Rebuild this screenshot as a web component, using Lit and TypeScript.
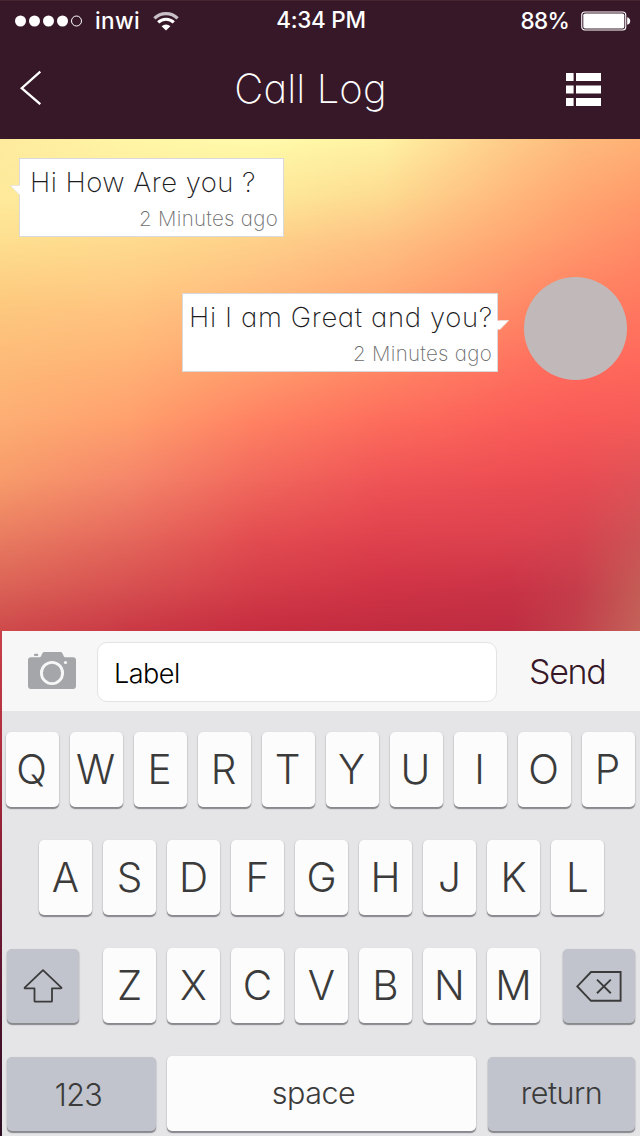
import { LitElement, html, css, svg } from "lit";
import { customElement, property } from "lit/decorators.js";

/** Horizontal positions of the mesh columns, in percent. */
const COLUMNS = [0, 20, 40, 60, 80, 90, 100];

/** Colour mesh of the wallpaper: each row is [y, one colour per column]. */
const MESH: [number, string[]][] = [
  [0, ["#feeb9e", "#fff6a6", "#fffbab", "#fff3a3", "#fecb88", "#febb7c", "#ffb275"]],
  [61, ["#fee99a", "#feea9a", "#fde898", "#fdd98f", "#ffb67a", "#ffa671", "#ff9a6b"]],
  [101, ["#fedf90", "#fedb8e", "#fed18a", "#fec283", "#ffa773", "#ff996c", "#ff8c66"]],
  [161, ["#fdca80", "#ffc782", "#ffb97c", "#ffa874", "#ff8e68", "#ff8062", "#ff7a60"]],
  [221, ["#fdbb78", "#ffb476", "#ffa06e", "#ff8a66", "#ff7460", "#ff6c5d", "#ff695c"]],
  [281, ["#fdae73", "#ffa06d", "#ff8263", "#fd6d5c", "#fb5f59", "#f95b58", "#f65b58"]],
  [341, ["#f79b6b", "#f5866a", "#f1685c", "#ef5456", "#ec4d53", "#e84c53", "#df5257"]],
  [401, ["#e87b60", "#e4675b", "#e24c50", "#df414d", "#db414e", "#d5434f", "#cc5355"]],
  [451, ["#da6156", "#d64f50", "#d33c48", "#cf3345", "#c93346", "#c53c4a", "#c45c56"]],
  [492, ["#ce4a4b", "#c93945", "#c62d40", "#c12c40", "#be2d42", "#c0404a", "#c4625a"]],
];

@customElement("mesh-wallpaper")
class MeshWallpaper extends LitElement {
  static styles = css`
    :host { display: grid; overflow: hidden; }
    .layer { grid-area: 1 / 1; }
  `;
  render() {
    return MESH.map(([y, colours], i) => {
      const from = i ? MESH[i - 1][0] : -1;
      const mask = `linear-gradient(to bottom, transparent ${from}px, #000 ${y}px)`;
      const stops = colours.map((c, n) => `${c} ${COLUMNS[n]}%`).join(",");
      return html`<div class="layer" style="background:linear-gradient(to right, ${stops});mask-image:${mask};-webkit-mask-image:${mask}"></div>`;
    });
  }
}

@customElement("status-bar")
class StatusBar extends LitElement {
  static styles = css`
    :host { display: grid; grid-template-columns: 1fr auto 1fr; align-items: center; height: 40px; padding: 0 9px 0 15px; color: #fff; font: 500 22.5px/38px Inter, sans-serif; }
    .left, .right { display: flex; align-items: center; }
    .left { gap: 13px; }
    .right { justify-content: flex-end; gap: 11px; }
    .carrier { letter-spacing: 0.35px; padding-bottom: 1px; }
    .time { letter-spacing: -0.25px; margin-left: -4px; padding-bottom: 2px; }
    .pct { letter-spacing: -0.75px; padding-bottom: 1px; margin-right: 1px; }
    svg { display: block; }
  `;
  render() {
    return html`
      <div class="left">
        <svg width="67" height="12" viewBox="0 0 67 12">
          ${[5.5, 19.5, 33.5, 47.5].map((x) => svg`<circle cx=${x} cy="6" r="5.5" fill="#fff"/>`)}
          <circle cx="61.5" cy="6" r="5" fill="none" stroke="#fff"/>
        </svg>
        <span class="carrier">inwi</span>
        <svg width="26" height="19" viewBox="0 0 26 19">
          <path d="M1.4 6.4A16.6 16.6 0 0 1 24.6 6.4" fill="none" stroke="#c9c0c6" stroke-width="3.3"/>
          <path d="M5.2 10.3A11.2 11.2 0 0 1 20.8 10.3" fill="none" stroke="#fff" stroke-width="3"/>
          <path d="M8.6 14.2A6.5 6.5 0 0 1 17.4 14.2L13 18.6Z" fill="#fff"/>
        </svg>
      </div>
      <span class="time">4:34 PM</span>
      <div class="right">
        <span class="pct">88%</span>
        <svg width="50" height="20" viewBox="0 0 50 20">
          <rect x="0.75" y="1" width="44" height="18" rx="3" fill="none" stroke="#fff" stroke-width="1.1"/>
          <rect x="2.3" y="2.5" width="41" height="15" rx="1.8" fill="#fff"/>
          <path d="M46.2 6.2C50.2 7 50.2 13 46.2 13.8Z" fill="#fff"/>
        </svg>
      </div>`;
  }
}

@customElement("nav-bar")
class NavBar extends LitElement {
  static styles = css`
    :host { display: grid; grid-template-columns: 1fr auto 1fr; height: 98px; box-sizing: border-box; padding: 28px 39px 0 20px; align-items: start; color: #fff; }
    .title { font: 200 40px/40px Inter, sans-serif; font-feature-settings: "cv11"; letter-spacing: 0.1px; }
    .menu { justify-self: end; padding-top: 4px; }
    svg { display: block; }
  `;
  render() {
    return html`
      <svg width="22" height="36" viewBox="0 0 22 36"><path d="M20.3 2.7L1.7 19.2L20.3 35.2" fill="none" stroke="#fff" stroke-width="2.3"/></svg>
      <span class="title">Call Log</span>
      <svg class="menu" width="35" height="33" viewBox="0 0 35 33" fill="#fff">
        ${[0, 12.5, 25].map((y) => svg`<rect x="0" y=${y} width="7.6" height="8"/><rect x="10" y=${y} width="25" height="8"/>`)}
      </svg>`;
  }
}

@customElement("chat-bubble")
class ChatBubble extends LitElement {
  @property() text = "";
  @property() time = "";
  @property({ reflect: true }) side = "left";
  static styles = css`
    :host { display: block; position: relative; box-sizing: border-box; height: 79px; background: #fff; border: 1px solid #d9d9dc; font-family: Inter, sans-serif; font-feature-settings: "cv11"; }
    .text { font-size: 27.5px; line-height: 34px; font-weight: 200; color: #1c1c1e; padding: 6px 0 0 10px; white-space: nowrap; letter-spacing: 0.45px; }
    :host([side="right"]) .text { padding-left: 6px; letter-spacing: 0.62px; }
    .time { font-size: 20.5px; line-height: 24px; font-weight: 200; color: #6c6c6e; text-align: right; padding: 8px 5px 0 0; letter-spacing: 0.3px; }
    .tail { position: absolute; top: 26px; left: -10px; }
    :host([side="right"]) .tail { left: auto; right: -12px; transform: scaleX(-1); }
  `;
  render() {
    return html`<div class="text">${this.text}</div>
      <div class="time">${this.time}</div>
      <svg class="tail" width="12" height="11" viewBox="0 0 12 11"><path d="M12 .5H0.3L9.2 9.6H12Z" fill="#fff"/><path d="M9 .5H.3L9 9.6" fill="none" stroke="#e4e1da" stroke-width=".8"/></svg>`;
  }
}

@customElement("key-cap")
class KeyCap extends LitElement {
  static styles = css`
    :host { display: flex; justify-content: center; align-items: center; box-sizing: border-box; width: 53px; height: 75px; border-radius: 5px; background: #fcfcfc; box-shadow: 0 1.5px 1px #88898c, 0 1px 2px #b5b6ba; color: #3b3b3b; font: 300 40.5px/75px Inter, sans-serif; }
    :host([tone="dark"]) { background: #c1c4cd; height: 74px; margin-top: 1px; }
    :host([size="word"]) { font-size: 30.5px; letter-spacing: -0.5px; }
  `;
  render() {
    return html`<slot></slot>`;
  }
}

@customElement("app-root")
class AppRoot extends LitElement {
  static styles = css`
    :host { display: grid; grid-template-rows: 139px 492px 505px; width: 640px; height: 1136px; overflow: hidden; font-family: Inter, sans-serif; }
    .top { background: #371829; border-top: 1px solid #482631; box-sizing: border-box; }
    .chat { display: grid; }
    .chat > * { grid-area: 1 / 1; }
    .thread { display: flex; flex-direction: column; gap: 40px; padding: 19px 13px 0 19px; z-index: 1; }
    .b1 { width: 265px; }
    .reply { display: flex; justify-content: flex-end; align-items: flex-start; gap: 26px; }
    .b2 { width: 316px; margin-top: 16px; }
    .avatar { width: 103px; height: 103px; border-radius: 50%; background: #c1b9b9; }
    .bottom { background: linear-gradient(#c8404a, #a8283a 30%, #7c1b36 50%, #3a1028 88%, #2e1024); padding-left: 2px; display: grid; grid-template-rows: 80px 1fr; }
    .compose { background: #f7f7f7; display: flex; align-items: flex-start; }
    .camera { display: block; margin: 20px 0 0 26px; }
    .field { margin: 11px 0 0 21px; width: 400px; height: 60px; box-sizing: border-box; border: 1px solid #e3e3e6; border-radius: 10px; background: #fff; color: #000; font: 300 27px/61px Inter, sans-serif; padding-left: 16px; letter-spacing: -0.5px; }
    .send { margin-left: 32px; color: #371829; font: 300 34px/82px Inter, sans-serif; letter-spacing: -1.3px; }
    .keys { background: #e5e5e7; padding-top: 21px; display: flex; flex-direction: column; gap: 33px; }
    .row { display: flex; gap: 11px; height: 75px; }
    .r1 { padding-left: 4px; }
    .r1 key-cap { padding-right: 2px; }
    .r2 { padding-left: 37px; }
    .r3, .r4 { padding-left: 5px; }
    .shift { width: 72px; margin-right: 13px; }
    .del { width: 72px; margin-left: 12px; }
    .num { width: 149px; padding-right: 6px; }
    .space { width: 309px; padding: 0 16px 2px 0; }
    .ret { width: 147px; margin-left: 1px; padding-bottom: 3px; }
  `;
  private letters(s: string) {
    return [...s].map((c) => html`<key-cap>${c}</key-cap>`);
  }
  render() {
    return html`
      <div class="top"><status-bar></status-bar><nav-bar></nav-bar></div>
      <div class="chat">
        <mesh-wallpaper></mesh-wallpaper>
        <div class="thread">
          <chat-bubble class="b1" text="Hi How Are you ?" time="2 Minutes ago"></chat-bubble>
          <div class="reply">
            <chat-bubble class="b2" side="right" text="Hi I am Great and you?" time="2 Minutes ago"></chat-bubble>
            <div class="avatar"></div>
          </div>
        </div>
      </div>
      <div class="bottom">
        <div class="compose">
          <svg class="camera" width="48" height="39" viewBox="0 0 48 39">
            <path d="M3 6.3H11.6Q12.6 6.3 13 5.3L14.4 2.3Q15 1 16.4 1H32.4Q33.8 1 34.4 2.3L35.8 5.3Q36.2 6.3 37.2 6.3H45Q48 6.3 48 9.3V35Q48 38 45 38H3Q0 38 0 35V9.3Q0 6.3 3 6.3Z" fill="#a5a6aa"/>
            <rect x="6" y="2.8" width="4.2" height="2.2" rx=".8" fill="#a5a6aa"/>
            <circle cx="24" cy="22" r="10.6" fill="none" stroke="#f7f7f7" stroke-width="2.9"/>
            <circle cx="37.5" cy="11.5" r="1.6" fill="#f7f7f7"/>
          </svg>
          <div class="field">Label</div>
          <span class="send">Send</span>
        </div>
        <div class="keys">
          <div class="row r1">${this.letters("QWERTYUIOP")}</div>
          <div class="row r2">${this.letters("ASDFGHJKL")}</div>
          <div class="row r3">
            <key-cap class="shift" tone="dark">
              <svg width="40" height="34" viewBox="0 0 40 34"><path d="M20 1.2L38.4 18.6Q38.6 19.3 37.8 19.3H29V32Q29 32.6 28.4 32.6H12.2Q11.5 32.6 11.5 32V19.3H2.2Q1.4 19.3 1.7 18.6Z" fill="none" stroke="#3b3b3b" stroke-width="1.8" stroke-linejoin="round"/></svg>
            </key-cap>
            ${this.letters("ZXCVBNM")}
            <key-cap class="del" tone="dark">
              <svg width="46" height="31" viewBox="0 0 46 31"><path d="M15 1H44.6V29.8H15L1.3 15.4Z" fill="none" stroke="#3b3b3b" stroke-width="1.9"/><path d="M21 8.6L34.8 22.2M34.8 8.6L21 22.2" stroke="#3b3b3b" stroke-width="1.9"/></svg>
            </key-cap>
          </div>
          <div class="row r4">
            <key-cap class="num" tone="dark" size="word">123</key-cap>
            <key-cap class="space" size="word">space</key-cap>
            <key-cap class="ret" tone="dark" size="word">return</key-cap>
          </div>
        </div>
      </div>`;
  }
}
